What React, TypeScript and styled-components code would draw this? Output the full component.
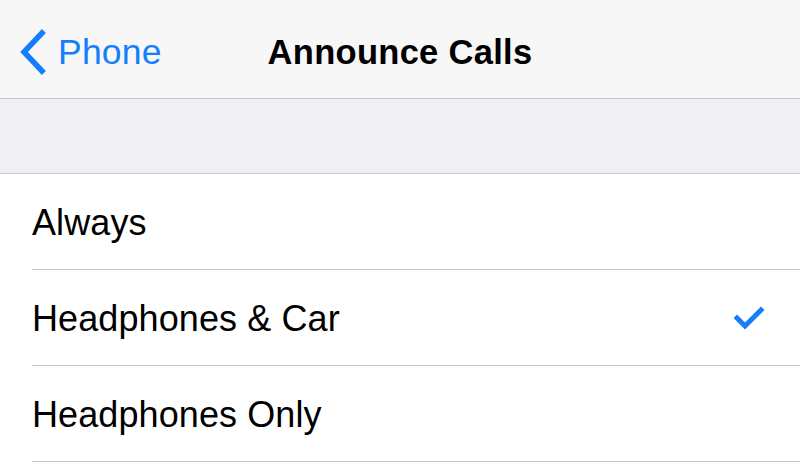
import React from "react";
import styled, { createGlobalStyle } from "styled-components";

const GlobalStyle = createGlobalStyle`
  html, body {
    margin: 0;
    padding: 0;
    background: #ffffff;
  }
  body {
    font-family: "Liberation Sans", Arial, sans-serif;
    -webkit-font-smoothing: antialiased;
  }
`;

const Screen = styled.div`
  width: 800px;
  height: 464px;
  overflow: hidden;
  background: #ffffff;
`;

const NavBar = styled.div`
  height: 99px;
  padding-top: 6px;
  background: #f7f7f8;
  border-bottom: 1.5px solid #c4c4c8;
  display: grid;
  grid-template-columns: 1fr auto 1fr;
  align-items: center;
  box-sizing: border-box;
`;

const BackButton = styled.div`
  display: flex;
  align-items: center;
  gap: 12px;
  padding-left: 18px;
  color: #157efb;
  font-size: 35.5px;
  letter-spacing: 0.2px;
`;

const Title = styled.div`
  font-size: 34.5px;
  font-weight: bold;
  color: #000;
  letter-spacing: 0.3px;
`;

const SectionGap = styled.div`
  height: 75px;
  background: #efeff4;
  border-bottom: 1.5px solid #c8c7cc;
  box-sizing: border-box;
`;

const List = styled.div`
  background: #ffffff;
`;

const Row = styled.div`
  height: 96px;
  margin-left: 32px;
  padding-right: 36px;
  display: flex;
  align-items: center;
  justify-content: space-between;
  border-bottom: 1.5px solid #c8c7cc;
  box-sizing: border-box;
`;

const Label = styled.div`
  font-size: 36px;
  color: #000;
  letter-spacing: 0.1px;
  margin-top: 2px;
`;

const Chevron = () => (
  <svg width="28" height="46" viewBox="0 0 28 46">
    <path d="M24 4 L6 23 L24 42" fill="none" stroke="#157efb" strokeWidth="5.5" strokeLinecap="square" strokeLinejoin="miter" />
  </svg>
);

const Check = () => (
  <svg width="30" height="24" viewBox="0 0 30 24">
    <path d="M3 12 L11 20 L27 4" fill="none" stroke="#157efb" strokeWidth="5" strokeLinecap="square" />
  </svg>
);

const options = [
  { label: "Always", selected: false },
  { label: "Headphones & Car", selected: true },
  { label: "Headphones Only", selected: false },
];

export default function App() {
  return (
    <Screen>
      <GlobalStyle />
      <NavBar>
        <BackButton>
          <Chevron />
          <span>Phone</span>
        </BackButton>
        <Title>Announce Calls</Title>
        <div />
      </NavBar>
      <SectionGap />
      <List>
        {options.map((o) => (
          <Row key={o.label}>
            <Label>{o.label}</Label>
            {o.selected && <Check />}
          </Row>
        ))}
      </List>
    </Screen>
  );
}
